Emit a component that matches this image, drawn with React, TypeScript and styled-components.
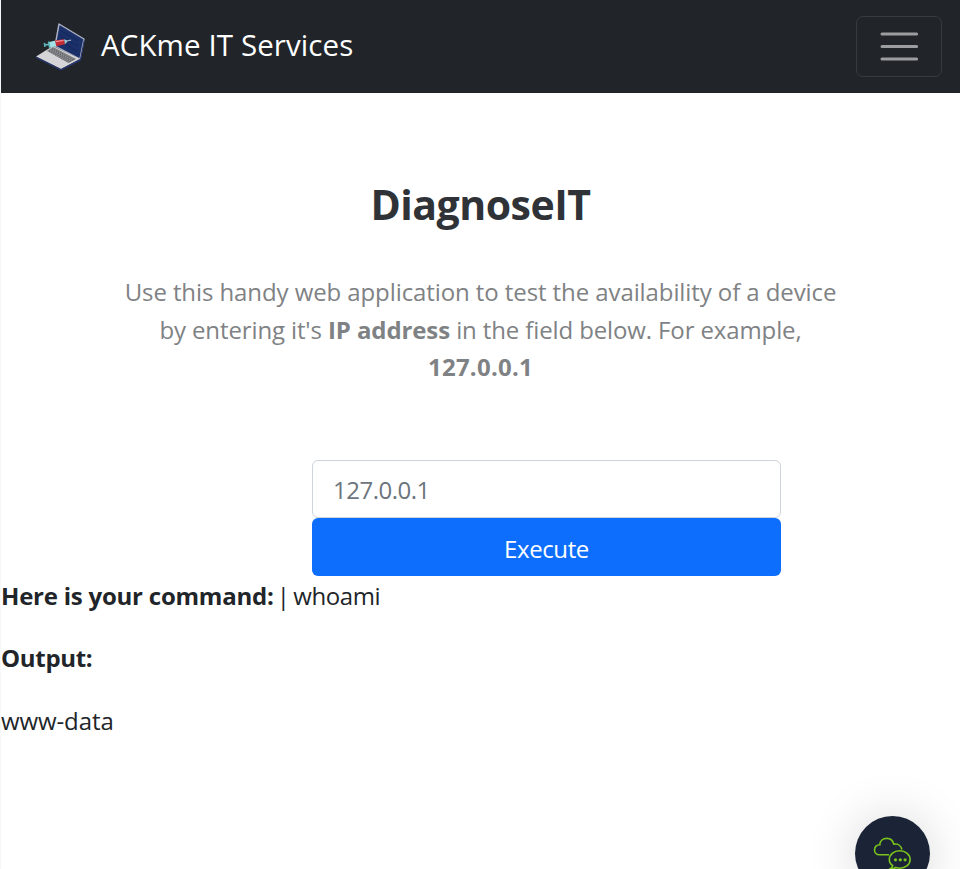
import React from "react";
import styled, { createGlobalStyle } from "styled-components";

const GlobalStyle = createGlobalStyle`
  *, *::before, *::after { box-sizing: border-box; }
  html, body { margin: 0; height: 869px; overflow: hidden; background: #fff; }
  body {
    font-family: "Open Sans", "Noto Sans", sans-serif;
    font-size: 24px;
    line-height: 37.5px;
    color: #212529;
  }
`;

const Page = styled.div`
  height: 869px;
  overflow: hidden;
  border-left: 1px solid #f6f7f8;
`;

const Navbar = styled.header`
  display: flex;
  align-items: center;
  justify-content: space-between;
  height: 93px;
  padding: 0 18px 0 33px;
  background: #212529;
`;

const Brand = styled.a`
  display: flex;
  align-items: center;
  gap: 15px;
  color: #fff;
  font-size: 29.5px;
  letter-spacing: 0.1px;
  line-height: 46px;
  text-decoration: none;
  white-space: nowrap;
`;

const BrandText = styled.span`
  padding-bottom: 3px;
`;

const Toggler = styled.button`
  display: flex;
  align-items: center;
  justify-content: center;
  width: 86px;
  height: 61px;
  padding: 0;
  border: 1px solid #373b3e;
  border-radius: 7px;
  background: transparent;
`;

const Main = styled.main`
  display: flex;
  flex-direction: column;
`;

const Title = styled.h1`
  margin: 83px 0 0;
  text-align: center;
  font-size: 41px;
  line-height: 56px;
  font-weight: 700;
  letter-spacing: -0.5px;
  color: #2f3337;
`;

const Lead = styled.p`
  margin: 41px 0 0;
  text-align: center;
  color: #7f8284;
`;

const Line = styled.span<{ $track: number }>`
  display: block;
  white-space: nowrap;
  letter-spacing: ${(p) => p.$track}px;
`;

const Strong = styled.strong<{ $track: number }>`
  font-weight: 700;
  letter-spacing: ${(p) => p.$track}px;
`;

const Separator = styled.span`
  letter-spacing: -2px;
  margin-left: -1px;
  margin-right: 1px;
`;

const Form = styled.form`
  display: flex;
  flex-direction: column;
  width: 469px;
  margin: 74px 0 0 311px;
`;

const Input = styled.input`
  height: 58px;
  padding: 2px 20px 0;
  border: 1px solid #ced4da;
  border-radius: 6px;
  font: inherit;
  letter-spacing: -0.5px;
  color: #212529;
  outline: none;
  &::placeholder { color: #6c757d; opacity: 1; }
`;

const Submit = styled.button`
  height: 58px;
  padding: 4px 0 0;
  border: 0;
  border-radius: 6px;
  background: #0d6efd;
  color: #fff;
  font: inherit;
  letter-spacing: -0.4px;
`;

const Result = styled.section`
  display: flex;
  flex-direction: column;
  gap: 25.2px;
  padding-top: 1.3px;
`;

const ChatButton = styled.button`
  position: fixed;
  left: 855px;
  top: 816px;
  width: 75px;
  height: 75px;
  padding: 0;
  border: 0;
  border-radius: 50%;
  background: #1b2437;
  box-shadow: 0 2px 50px rgba(0, 0, 0, 0.17);
`;

const ChatSvg = styled.svg`
  display: block;
`;

const keyRows = [0, 1, 2, 3];

const LaptopLogo = () => (
  <svg width="52" height="52" viewBox="0 0 52 52">
    <path d="M25 3 L50 18 L46 38 L21 25 Z" fill="#1b3068" stroke="#aeb4c4" strokeWidth="1.4" strokeLinejoin="round" />
    <path d="M27 10l17 10M26 15l18 10M26 20l17 10" stroke="#152a5e" strokeWidth="1.2" />
    <path d="M2 35.5 L19 25 L46 38 L27 48 Z" fill="#d5d5d7" />
    <path d="M2 35.5 L27 48 L46 38 L50 18 L50.6 20 L47 39.5 L27 49.6 L2 37 Z" fill="#26366f" />
    <path d="M13 30 L19 26 L42 38 L34.5 42 Z" fill="#6a6b6f" />
    {keyRows.map((r) => (
      <path key={r} d={`M${14 + r * 1.6} ${29.9 - r * 1.1} l21 11.1`} stroke="#b4b4b6" strokeWidth="0.8" strokeDasharray="1.2 1" />
    ))}
    <path d="M14.5 21.2 L21.5 19.4 L22.3 25.2 L15.6 26.4 Z" fill="#9fe3e8" />
    <path d="M21 19.5 L30 18.2 L31 23.2 L22.2 25.2 Z" fill="#c52b35" />
    <path d="M22 20.6l7.5-1.3" stroke="#ef8b90" strokeWidth="1.3" />
    <path d="M30 18.2l3 1.1 .3 1.5L31 23.2Z" fill="#9dc8d0" />
    <path d="M32.5 20l4.5-.9" stroke="#9fb5c2" strokeWidth="1.2" />
    <path d="M14.6 20.5l1.2 6.5M10.5 24l4-.6M10.4 21.8l.6 4" stroke="#60b6bc" strokeWidth="1.6" />
  </svg>
);

const MenuIcon = () => (
  <svg width="48" height="48" viewBox="0 0 48 48">
    <path d="M7 11h34.6M7 23.5h34.6M7 36h34.6" stroke="#9b9da0" strokeWidth="3" strokeLinecap="round" />
  </svg>
);

const ChatIcon = () => (
  <ChatSvg width="75" height="75" viewBox="0 0 75 75" fill="none" stroke="#7ac41b" strokeWidth="1.6">
    <path d="M34 38.7H24.5c-3 0-5-2.1-5-4.8 0-3.2 2.3-5.2 5.3-5.1 0-4 3.2-6.4 7-6.4 4 0 6.2 2.5 7 5.8 4.4-.7 7.4 1.9 8 5.4" />
    <path d="M37.7 49.6c-2.3-1.5-3.4-3.6-3.4-6.1 0-5 4.4-8.7 10.4-8.7s10.4 3.7 10.4 8.7-4.4 8.7-10.4 8.7c-1.5 0-2.8-.2-4-.7-1.5 1.1-3.4 1.5-5.6 1.4 1.4-.8 2.3-1.9 2.6-3.3Z" />
    <g fill="#7ac41b" stroke="none">
      <circle cx="40.5" cy="43.8" r="1.6" />
      <circle cx="45.3" cy="43.8" r="1.6" />
      <circle cx="50.1" cy="43.8" r="1.6" />
    </g>
  </ChatSvg>
);

export default function App() {
  return (
    <Page>
      <GlobalStyle />
      <Navbar>
        <Brand>
          <LaptopLogo />
          <BrandText>ACKme IT Services</BrandText>
        </Brand>
        <Toggler aria-label="Toggle navigation">
          <MenuIcon />
        </Toggler>
      </Navbar>
      <Main>
        <Title>DiagnoseIT</Title>
        <Lead>
          <Line $track={-0.09}>Use this handy web application to test the availability of a device</Line>
          <Line $track={-0.12}>
            by entering it's <Strong $track={-0.1}>IP address</Strong> in the field below. For example,
          </Line>
          <Line $track={0}>
            <Strong $track={0.25}>127.0.0.1</Strong>
          </Line>
        </Lead>
        <Form onSubmit={(e: React.FormEvent) => e.preventDefault()}>
          <Input placeholder="127.0.0.1" />
          <Submit>Execute</Submit>
        </Form>
        <Result>
          <Line $track={-0.4}>
            <Strong $track={-0.23}>Here is your command:</Strong>
            <Separator> | </Separator>
            whoami
          </Line>
          <Line $track={-0.2}>
            <Strong $track={-0.3}>Output:</Strong>
          </Line>
          <Line $track={-0.1}>www-data</Line>
        </Result>
      </Main>
      <ChatButton aria-label="Open chat">
        <ChatIcon />
      </ChatButton>
    </Page>
  );
}
